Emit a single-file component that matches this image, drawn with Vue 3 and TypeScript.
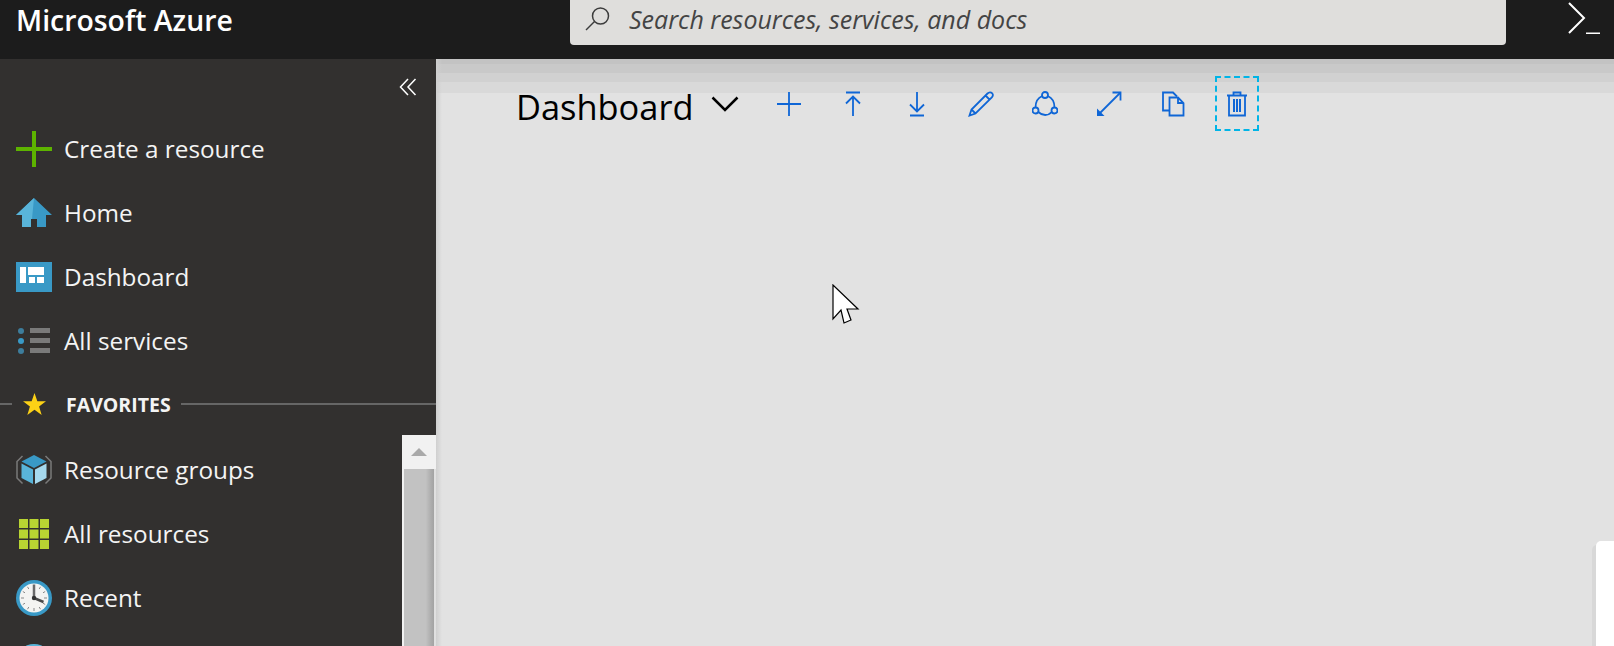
<script setup lang="ts">
const topItems = ['Create a resource', 'Home', 'Dashboard', 'All services']
// last row is cut off by the window, only the top of its icon shows
const favItems = ['Resource groups', 'All resources', 'Recent', '']
</script>

<template>
  <div class="portal">
    <header class="topbar">
      <div class="brand">Microsoft Azure</div>
      <div class="search">
        <svg class="search-icon" width="26" height="26" viewBox="0 0 26 26" fill="none" stroke="#3c3c3c" stroke-width="1.5">
          <circle cx="15.5" cy="10" r="8" />
          <path d="M9.5 15.5 1 24" />
        </svg>
        <span class="search-text">Search resources, services, and docs</span>
      </div>
      <svg class="shell" width="34" height="32" viewBox="0 0 34 32" fill="none" stroke="#fff" stroke-width="2">
        <path d="M2 1 17 16 2 31" />
        <path d="M19 31.500H33" />
      </svg>
    </header>

    <div class="body">
      <aside class="sidebar">
        <div class="collapse">
          <svg width="18" height="18" viewBox="0 0 18 18" fill="none" stroke="#fff" stroke-width="1.500">
            <path d="M9 1 1.500 9 9 17" />
            <path d="M16.500 1 9 9 16.500 17" />
          </svg>
        </div>

        <nav class="nav-top">
          <a v-for="(name, i) in topItems" :key="name" class="nav-item">
            <span class="nav-icon">
              <svg v-if="i === 0" width="36" height="36" viewBox="0 0 36 36" fill="#5db300">
                <rect x="16" y="0" width="4" height="36" />
                <rect x="0" y="16" width="36" height="4" />
              </svg>
              <svg v-else-if="i === 1" width="36" height="30" viewBox="0 0 36 30">
                <path d="M18 0 0 17H6V29H15V21H21V29H30V17H36Z" fill="#3999c6" />
                <path d="M18 0 0 17H6V29H15V21H16L18 0Z" fill="#59b4d9" />
              </svg>
              <svg v-else-if="i === 2" width="36" height="30" viewBox="0 0 36 30">
                <rect width="36" height="30" fill="#3999c6" />
                <g fill="#fff">
                  <rect x="4" y="5" width="6" height="16" />
                  <rect x="12" y="5" width="16" height="8" />
                  <rect x="13" y="15" width="6" height="6" />
                  <rect x="21" y="15" width="7" height="6" />
                </g>
              </svg>
              <svg v-else width="36" height="26" viewBox="0 0 36 26">
                <circle cx="5" cy="3" r="3" fill="#3d7d9c" />
                <circle cx="5" cy="13" r="3" fill="#3999c6" />
                <circle cx="5" cy="23" r="3" fill="#3d7d9c" />
                <g fill="#7a7a7a">
                  <rect x="14" y="0" width="20" height="5" />
                  <rect x="14" y="10" width="20" height="5" />
                  <rect x="14" y="20" width="20" height="5" />
                </g>
              </svg>
            </span>
            <span class="nav-label">{{ name }}</span>
          </a>
        </nav>

        <div class="fav-head">
          <svg class="star" width="23" height="22" viewBox="0 0 24 23" fill="#fcd116">
            <path d="M12 0 15 8.500H24L16.800 14 19.500 23 12 17.500 4.500 23 7.200 14 0 8.500H9Z" />
          </svg>
          <span class="fav-title">FAVORITES</span>
          <span class="fav-line"></span>
        </div>

        <div class="fav-wrap">
          <nav class="nav-fav">
            <a v-for="(name, i) in favItems" :key="i" class="nav-item">
              <span class="nav-icon">
                <svg v-if="i === 0" width="36" height="30" viewBox="0 0 36 30">
                  <path d="M6.500 1 1 6.500V23L6.500 28.500M29.500 1 35 6.500V23L29.500 28.500" fill="none" stroke="#7a7a7a" stroke-width="1.500" />
                  <path d="M18 0 5.500 6.500 18 13 30.500 6.500Z" fill="#3999c6" />
                  <path d="M5.500 8.500 17 14.500V29L5.500 23Z" fill="#59b4d9" />
                  <path d="M30.500 8.500 19 14.500V29L30.500 23Z" fill="#a5d9ee" />
                </svg>
                <svg v-else-if="i === 1" width="30" height="30" viewBox="0 0 30 30" fill="#b8d432">
                  <rect x="0" y="0" width="9" height="9" />
                  <rect x="10.500" y="0" width="9" height="9" />
                  <rect x="21" y="0" width="9" height="9" />
                  <rect x="0" y="10.500" width="9" height="9" />
                  <rect x="10.500" y="10.500" width="9" height="9" />
                  <rect x="21" y="10.500" width="9" height="9" />
                  <rect x="0" y="21" width="9" height="9" />
                  <rect x="10.500" y="21" width="9" height="9" />
                  <rect x="21" y="21" width="9" height="9" />
                </svg>
                <svg v-else-if="i === 2" width="36" height="36" viewBox="0 0 36 36">
                  <circle cx="18" cy="18" r="18" fill="#3999c6" />
                  <circle cx="18" cy="18" r="14.500" fill="#f4f4f2" />
                  <g stroke="#8a8a8a" stroke-width="1">
                    <path d="M18 5V8M18 28V31M5 18H8M28 18H31M11.500 6.800 12.800 9M24.500 6.800 23.200 9M29.200 11.500 27 12.800M6.800 24.500 9 23.200M6.800 11.500 9 12.800M29.200 24.500 27 23.200M11.500 29.200 12.800 27M24.500 29.200 23.200 27" />
                  </g>
                  <path d="M18 18V4.500" stroke="#6a6a6a" stroke-width="2.500" />
                  <path d="M18 18 27.500 22" stroke="#4a4a4a" stroke-width="2.500" />
                  <circle cx="18" cy="18" r="2.200" fill="#333" />
                </svg>
                <svg v-else width="36" height="36" viewBox="0 0 36 36">
                  <circle cx="18" cy="18" r="18" fill="#59b4d9" />
                  <path d="M9 3 16 8 26 4M2 14 12 12" fill="none" stroke="#fff" stroke-width="2" />
                </svg>
              </span>
              <span v-if="name" class="nav-label">{{ name }}</span>
            </a>
          </nav>
          <div class="scrollbar">
            <div class="scroll-up"><span class="scroll-arrow"></span></div>
            <div class="scroll-thumb"></div>
          </div>
        </div>
      </aside>

      <main class="main">
        <div class="toolbar">
          <h1 class="title">Dashboard</h1>
          <svg class="title-chevron" width="28" height="16" viewBox="0 0 28 16" fill="none" stroke="#000" stroke-width="2.500">
            <path d="M1.500 1.500 14 14 26.500 1.500" />
          </svg>
          <div class="actions">
            <button class="action">
              <svg width="26" height="26" viewBox="0 0 26 26"><path d="M13 1V25M1 13H25" /></svg>
            </button>
            <button class="action">
              <svg width="26" height="26" viewBox="0 0 26 26"><path d="M6 1.500H20M13 25V6M6 12.500 13 5.500 20 12.500" /></svg>
            </button>
            <button class="action">
              <svg width="26" height="26" viewBox="0 0 26 26"><path d="M13 1V20M6 13.500 13 20.500 20 13.500M6 24.500H20" /></svg>
            </button>
            <button class="action">
              <svg width="26" height="26" viewBox="0 0 26 26"><path d="M1.500 24.500 3.500 18.500 19.500 2.500C21 1 23 1 24 2.200 25.300 3.400 25 5 23.800 6.500L7.500 22.500ZM3.500 18.500 7.500 22.500M17.500 4.500 22 9" /></svg>
            </button>
            <button class="action">
              <svg width="26" height="26" viewBox="0 0 26 26">
                <circle cx="13" cy="4" r="3" />
                <circle cx="3.500" cy="19.500" r="3" />
                <circle cx="22.500" cy="19.500" r="3" />
                <path d="M10.200 5C6 6.800 3.500 11.500 3.500 16.500M15.800 5C20 6.800 22.500 11.500 22.500 16.500M6.300 21C10.500 25 16 25 19.700 21" />
              </svg>
            </button>
            <button class="action">
              <svg width="26" height="26" viewBox="0 0 26 26">
                <path d="M2 24 24.500 1.500" />
                <path class="fill" d="M1 25V17.500L8.500 25Z" />
                <path d="M16.500 1.500H24.500V9.500" />
              </svg>
            </button>
            <button class="action">
              <svg width="26" height="26" viewBox="0 0 26 26">
                <path d="M9 19.500H3V1.500H13L17 5.500" />
                <path d="M9.500 6.500H18L23.500 12V24.500H9.500ZM18 6.500V12H23.500" />
              </svg>
            </button>
            <button class="action action-focus">
              <svg width="26" height="26" viewBox="0 0 26 26">
                <path d="M3 4.500H23M9.500 4.500V1.500H16.500V4.500M5 4.500V24.500H21V4.500" />
                <path d="M10 8V21M13 8V21M16 8V21" stroke-width="2" />
              </svg>
            </button>
          </div>
        </div>

        <div class="side-panel"></div>

        <svg class="cursor" width="28" height="40" viewBox="0 0 28 40">
          <path d="M1 1V35L9 26 12 39 19 36 15 25H26Z" fill="#fff" stroke="#000" stroke-width="1.200" />
        </svg>
      </main>
    </div>
  </div>
</template>

<style>
html,
body {
  margin: 0;
  height: 100%;
  overflow: hidden;
}
</style>

<style scoped>
.portal {
  display: flex;
  flex-direction: column;
  height: 646px;
  overflow: hidden;
  font-family: 'Open Sans', 'Noto Sans', sans-serif;
}

.topbar {
  display: flex;
  align-items: flex-start;
  height: 59px;
  flex: none;
  background: #1c1c1c;
}

.brand {
  width: 554px;
  padding-left: 16px;
  color: #fff;
  font-size: 28.400px;
  font-weight: 600;
  line-height: 40px;
}

.search {
  display: flex;
  align-items: center;
  width: 936px;
  height: 45px;
  padding-bottom: 7px;
  box-sizing: border-box;
  background: #dfdedc;
  border-radius: 0 0 4px 4px;
}

.search-icon {
  margin-left: 15px;
}

.search-text {
  margin-left: 18px;
  color: #444;
  font-size: 25px;
  font-style: italic;
}

.shell {
  margin: 2px 0 0 61px;
}

.body {
  display: flex;
  flex: 1;
  min-height: 0;
}

.sidebar {
  display: flex;
  flex-direction: column;
  width: 436px;
  flex: none;
  background: #32302f;
  color: #f4f4f4;
}

.collapse {
  display: flex;
  justify-content: flex-end;
  height: 39px;
  padding: 19px 19px 0 0;
  box-sizing: border-box;
}

.nav-top {
  display: flex;
  flex-direction: column;
  padding-top: 19px;
}

.nav-item {
  display: flex;
  align-items: center;
  height: 64px;
  flex: none;
}

.nav-icon {
  display: flex;
  justify-content: center;
  width: 36px;
  margin: 0 12px 0 16px;
  flex: none;
}

.nav-label {
  font-size: 24.300px;
  line-height: 64px;
}

.fav-head {
  display: flex;
  align-items: center;
  height: 32px;
  margin-top: 15px;
  background: linear-gradient(#666, #666) 0 15px / 12px 2px no-repeat;
}

.star {
  margin-left: 23px;
}

.fav-title {
  margin: 0 10px 0 20px;
  font-size: 19.500px;
  font-weight: 700;
}

.fav-line {
  flex: 1;
  height: 2px;
  background: #666;
}

.fav-wrap {
  display: flex;
  flex: 1;
  min-height: 0;
  margin-top: 15px;
}

.nav-fav {
  display: flex;
  flex-direction: column;
  flex: 1;
  padding-top: 3px;
}

.scrollbar {
  display: flex;
  flex-direction: column;
  width: 34px;
  flex: none;
}

.scroll-up {
  display: flex;
  align-items: center;
  justify-content: center;
  height: 34px;
  flex: none;
  background: #f1f1f1;
}

.scroll-arrow {
  width: 0;
  height: 0;
  border-left: 8px solid transparent;
  border-right: 8px solid transparent;
  border-bottom: 8px solid #a9a9a9;
}

.scroll-thumb {
  flex: 1;
  background: linear-gradient(to right, #f1f1f1 6%, #c2c2c2 6%, #c2c2c2 70%, #adadad 85%, #a3a3a3 94%, #e0e0e0 94%);
}

.main {
  position: relative;
  flex: 1;
  background:
    linear-gradient(to right, #cfcfcf, rgba(226, 226, 226, 0) 6px),
    linear-gradient(#c3c3c3 0 5px, #c9c9c9 5px 14px, #d1d1d1 14px 23px, #d9d9d9 23px 34px, #e2e2e2 34px);
}

.toolbar {
  display: flex;
  align-items: center;
  height: 55px;
  margin: 17px 0 0 80px;
}

.title {
  margin: 6px 0 0;
  color: #000;
  font-size: 34.400px;
  font-weight: 400;
  line-height: 55px;
}

.title-chevron {
  margin-left: 18px;
  flex: none;
}

.actions {
  display: flex;
  gap: 20px;
  margin-left: 28px;
}

.action {
  display: flex;
  align-items: center;
  justify-content: center;
  width: 44px;
  height: 55px;
  padding: 0;
  background: none;
  border: 2px solid transparent;
  box-sizing: border-box;
}

.action svg {
  fill: none;
  stroke: #0f66d6;
  stroke-width: 1.800;
}

.action .fill {
  fill: #0f66d6;
  stroke: none;
}

.action-focus {
  border: 2px dashed #00b4e6;
}

.side-panel {
  position: absolute;
  right: 0;
  bottom: 0;
  width: 18px;
  height: 105px;
  background: #fff;
  border-radius: 5px 0 0 0;
  box-shadow: -4px 4px 0 #d8d8d8;
}

.cursor {
  position: absolute;
  left: 396px;
  top: 225px;
}
</style>
